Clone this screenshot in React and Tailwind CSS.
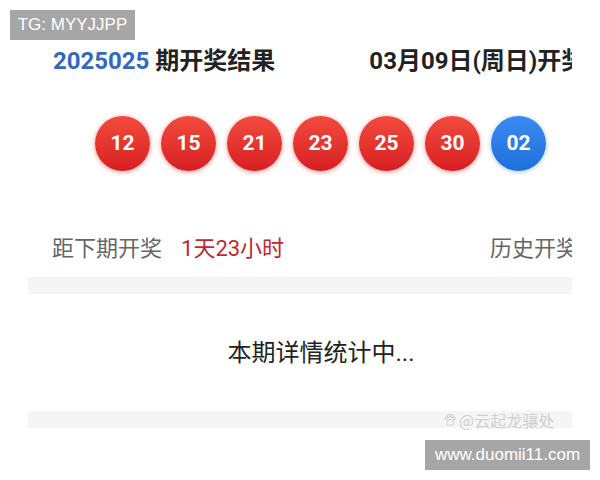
import React from 'react';

const reds = ['12', '15', '21', '23', '25', '30'];

const Ball = ({ n, blue }) => (
  <div
    className={
      'w-[55px] h-[55px] rounded-full flex items-center justify-center text-white text-[21px] font-bold ' +
      (blue
        ? 'bg-gradient-to-b from-[#3a8af0] to-[#1f6fdc] shadow-[0_1px_5px_rgba(60,140,240,0.45)]'
        : 'bg-gradient-to-b from-[#f24a3c] to-[#d71c22] shadow-[0_1px_5px_rgba(240,50,50,0.55)]')
    }
  >
    {n}
  </div>
);

const Paw = () => (
  <svg width="14" height="14" viewBox="0 0 24 24" fill="none" stroke="#c8c8c8" strokeWidth="1.6">
    <ellipse cx="6" cy="9" rx="2.2" ry="2.8" />
    <ellipse cx="10" cy="5" rx="2.2" ry="2.8" />
    <ellipse cx="15" cy="5" rx="2.2" ry="2.8" />
    <ellipse cx="19" cy="9.5" rx="2.2" ry="2.8" />
    <path d="M12.5 11c-3 0-6 4.5-6 7 0 2 1.5 3 3 3 1.3 0 2-.6 3-.6s1.7.6 3 .6c1.5 0 3-1 3-3 0-2.5-3-7-6-7z" />
  </svg>
);

export default function App() {
  return (
    <div className="relative w-[600px] h-[480px] bg-white overflow-hidden font-['Roboto','Noto_Sans_CJK_SC',sans-serif]">
      <div className="ml-[28px] w-[544px] overflow-hidden">
        {/* header */}
        <div className="flex items-center h-[30px] mt-[46px] pl-[25px] gap-[94px] whitespace-nowrap text-[24px] font-bold text-[#222]">
          <div>
            <span className="text-[#3467c0]">2025025</span> 期开奖结果
          </div>
          <div>03月09日(周日)开奖</div>
        </div>

        {/* balls */}
        <div className="flex gap-[11px] pl-[67px] mt-[40px]">
          {reds.map((n) => (
            <Ball key={n} n={n} />
          ))}
          <Ball n="02" blue />
        </div>

        {/* countdown row */}
        <div className="flex items-center h-[30px] mt-[62px] pl-[24px] whitespace-nowrap text-[22px] text-[#666]">
          <span>距下期开奖</span>
          <span className="ml-[19px] text-[#c1272d]">1天23小时</span>
          <span className="ml-auto -mr-[6px] w-[88px]">历史开奖</span>
        </div>

        <div className="h-[17px] bg-[#f5f5f5] mt-[14px]" />

        <div className="h-[117px] flex items-center justify-center pl-[42px] text-[24px] text-[#222]">
          本期详情统计中...
        </div>

        <div className="h-[17px] bg-[#f5f5f5]" />
      </div>

      {/* overlays */}
      <div className="absolute top-[10px] left-[10px] w-[125px] h-[30px] bg-[#a6a6a6] text-white text-[17px] flex items-center justify-center font-['Liberation_Sans',sans-serif]">
        TG: MYYJJPP
      </div>
      <div className="absolute top-[411px] left-[443px] h-[17px] flex items-center gap-[2px] text-[16px] text-[#cfcfcf] font-['Noto_Sans_CJK_SC',sans-serif]">
        <Paw />
        <span>@云起龙骧处</span>
      </div>
      <div className="absolute top-[440px] left-[425px] w-[165px] h-[30px] bg-[#a6a6a6] text-white text-[17px] flex items-center justify-center font-['Liberation_Sans',sans-serif]">
        www.duomii11.com
      </div>
    </div>
  );
}
